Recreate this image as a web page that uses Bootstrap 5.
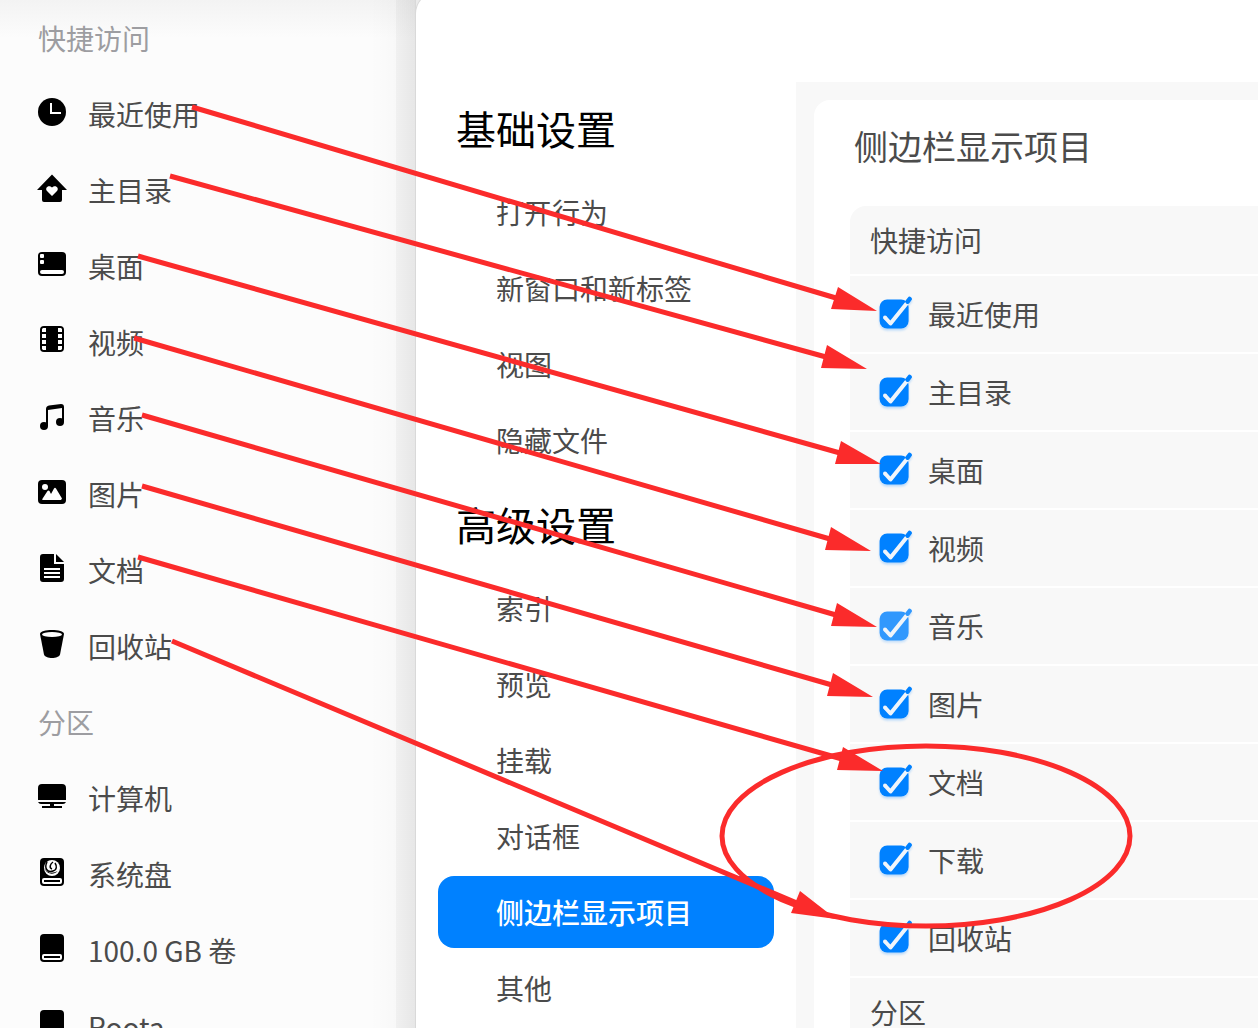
<!DOCTYPE html>
<html lang="zh-CN">
<head>
<meta charset="utf-8">
<meta name="viewport" content="width=device-width, initial-scale=1">
<title>侧边栏显示项目</title>
<link rel="stylesheet" href="https://cdn.jsdelivr.net/npm/bootstrap@5.3.0/dist/css/bootstrap.min.css">
<style>
body{font-family:"Noto Sans CJK SC","Noto Sans",sans-serif;font-size:28px;line-height:40px;color:#4b4b4b;background:#fcfcfc}
a{color:inherit;text-decoration:none}
.places{width:416px;background:
 linear-gradient(to right,transparent 396px,rgba(0,0,0,.03) 396px,rgba(0,0,0,.07) 415px,#d9d9d9 415px),
 linear-gradient(to right,transparent 370px,rgba(0,0,0,.015) 396px),
 linear-gradient(#f3f3f3,#fcfcfc 38px)}
.place-row{height:76px;padding:0 0 0 36px;gap:20px}
.place-head{height:76px;padding-left:38px;color:#9d9da1}
.place-row svg{width:32px;height:36px;color:#000}
.dialog-shell{background:#ebebeb}
.dialog-pane{background:#fff;border-top-left-radius:22px;margin-top:-8px;padding-top:8px;box-shadow:0 0 0 1px #d9d9d9}
.dialog-bar{height:82px}
.cats{width:380px;padding:0 22px}
.cat-head{height:92px;padding-left:18px;font-size:40px;line-height:60px;color:#000;font-weight:400}
.cats .nav-link{height:72px;margin:2px 0;padding:0 0 0 58px;border-radius:16px;color:#4b4b4b}
.cats .nav-link.active{background:#0081ff;color:#fff;font-weight:500}
.options{background:#f8f8f8;padding:18px 0 0 18px}
.sheet{background:#fff;border-top-left-radius:16px;padding-left:36px}
.sheet-title{height:106px;padding:0 0 14px 4px;font-size:34px;line-height:50px;font-weight:400}
.group{background:#f8f8f8;border-top-left-radius:16px}
.group-head{height:68px;padding-left:20px}
.check-row{height:78px;border-top:2px solid #fff;padding-left:29px;gap:15px}
.next-head{border-top:2px solid #fff;height:70px}
.tick{appearance:none;width:34px;height:36px;margin:0;filter:drop-shadow(0 2px 1px rgba(0,129,255,.25));background:url("data:image/svg+xml,%3Csvg xmlns='http://www.w3.org/2000/svg' viewBox='0 0 34 36'%3E%3Crect x='.6' y='3.500' width='29' height='29' rx='7.500' fill='%230081ff'/%3E%3Cpath d='M6 21.500l5.500 6L28 7' fill='none' stroke='%23f0f5fb' stroke-width='4' stroke-linejoin='round'/%3E%3Ccircle cx='6' cy='21.500' r='2' fill='%23f0f5fb'/%3E%3Cpath d='M28.600 5.600L30.600 3' stroke='%230081ff' stroke-width='4.500' stroke-linecap='round'/%3E%3C/svg%3E") center/100% 100% no-repeat}
.tick.faded{opacity:.8}
.notes{left:0;top:0;width:1258px;height:1028px;pointer-events:none;z-index:5}
</style>
<script src="https://cdn.jsdelivr.net/npm/bootstrap@5.3.0/dist/js/bootstrap.bundle.min.js"></script>
</head>
<body class="vh-100 overflow-hidden position-relative">
<div class="d-flex h-100 overflow-hidden">
<aside class="places flex-shrink-0 overflow-hidden">
 <div class="place-head d-flex align-items-center">快捷访问</div>
 <a href="#" class="place-row d-flex align-items-center"><svg viewBox="0 0 32 36"><circle cx="16" cy="16" r="14"/><path d="M15 7v10h10" fill="none" stroke="#fff" stroke-width="2"/></svg><span>最近使用</span></a>
 <a href="#" class="place-row d-flex align-items-center"><svg viewBox="0 0 32 36"><path d="M16 2.5L31 18h-5v10q0 2-2 2H8q-2 0-2-2V18H1z"/><path d="M16 24l-5-5c-2.500-3 1.500-7 5-3.500 3.500-3.500 7.500.5 5 3.500z" fill="#fff"/></svg><span>主目录</span></a>
 <a href="#" class="place-row d-flex align-items-center"><svg viewBox="0 0 32 36"><rect x="2" y="4" width="28" height="24" rx="4"/><g fill="#fff"><rect x="4" y="6" width="4" height="4" rx="1"/><rect x="4" y="12" width="4" height="4" rx="1"/><rect x="4" y="22" width="24" height="4" rx="2"/></g></svg><span>桌面</span></a>
 <a href="#" class="place-row d-flex align-items-center"><svg viewBox="0 0 32 36"><rect x="4" y="2" width="24" height="26" rx="4"/><path fill="#fff" d="M7 4h3v4H6V5zM6 10h4v4H6zM6 16h4v4H6zM6 22h4v4H7l-1-1zM22 4h3l1 1v3h-4zM22 10h4v4h-4zM22 16h4v4h-4zM22 22h4v3l-1 1h-3z"/></svg><span>视频</span></a>
 <a href="#" class="place-row d-flex align-items-center"><svg viewBox="0 0 32 36"><circle cx="8" cy="26" r="4"/><circle cx="24" cy="22" r="4"/><path d="M10 26V9q0-3 3-3.500l12-1.500q3 0 3 3v15h-2V8l-14 2v16z"/></svg><span>音乐</span></a>
 <a href="#" class="place-row d-flex align-items-center"><svg viewBox="0 0 32 36"><rect x="2" y="4" width="28" height="24" rx="4"/><circle cx="9" cy="11" r="3" fill="#fff"/><path fill="#fff" d="M6 23.500L11.500 15q1-1 2 0l1.500 3 3-5.500q1-1.500 2 0l6 10-1 1.500H7z"/></svg><span>图片</span></a>
 <a href="#" class="place-row d-flex align-items-center"><svg viewBox="0 0 32 36"><path d="M7 2h11v10h10v15q0 3-3 3H7q-3 0-3-3V5q0-3 3-3z"/><path d="M20 2l8 8h-8z"/><path d="M8 17h16M8 21h16M8 25h16" stroke="#fff" stroke-width="2"/></svg><span>文档</span></a>
 <a href="#" class="place-row d-flex align-items-center"><svg viewBox="0 0 32 36"><path d="M4 6c0-5.300 24-5.300 24 0l-4 20.500c-1 4.600-15 4.600-16 0z"/><ellipse cx="16" cy="6.500" rx="10" ry="2.500" fill="#fff"/></svg><span>回收站</span></a>
 <div class="place-head d-flex align-items-center">分区</div>
 <a href="#" class="place-row d-flex align-items-center"><svg viewBox="0 0 32 36"><path d="M2 8q0-4 4-4h20q4 0 4 4v12H2zM2 22h28q-1 2-3 2h-9v2h8v2H6v-2h8v-2H5q-2 0-3-2z"/></svg><span>计算机</span></a>
 <a href="#" class="place-row d-flex align-items-center"><svg viewBox="0 0 32 36"><rect x="4" y="2" width="24" height="28" rx="4"/><circle cx="16" cy="12" r="8" fill="#fff"/><path d="M11 6c-3 6 0 11 6 9 4-1 4-5 2-8M17 6c-3 2-4 6-1 7" fill="none" stroke="#000" stroke-width="1.500"/><path d="M8.500 12c2 5 8 6 13 3-3 4-11 4-13-3z"/><rect x="6" y="22" width="20" height="6" rx="2" fill="#fff"/><path d="M8 24h16v2H8z"/></svg><span>系统盘</span></a>
 <a href="#" class="place-row d-flex align-items-center"><svg viewBox="0 0 32 36"><rect x="4" y="2" width="24" height="28" rx="4"/><rect x="6" y="22" width="20" height="6" rx="2" fill="#fff"/><path d="M8 24h16v2H8z"/></svg><span>100.0 GB 卷</span></a>
 <a href="#" class="place-row d-flex align-items-center"><svg viewBox="0 0 32 36"><rect x="4" y="2" width="24" height="28" rx="4"/><rect x="6" y="22" width="20" height="6" rx="2" fill="#fff"/><path d="M8 24h16v2H8z"/></svg><span>Roota</span></a>
</aside>
<div class="dialog-shell flex-grow-1 d-flex">
<main class="dialog-pane flex-grow-1 d-flex flex-column">
 <div class="dialog-bar flex-shrink-0"></div>
 <div class="d-flex flex-grow-1">
 <nav class="cats flex-shrink-0">
  <h2 class="cat-head d-flex align-items-center m-0">基础设置</h2>
  <div class="nav nav-pills flex-column">
   <a href="#" class="nav-link d-flex align-items-center">打开行为</a>
   <a href="#" class="nav-link d-flex align-items-center">新窗口和新标签</a>
   <a href="#" class="nav-link d-flex align-items-center">视图</a>
   <a href="#" class="nav-link d-flex align-items-center">隐藏文件</a>
  </div>
  <h2 class="cat-head d-flex align-items-center m-0">高级设置</h2>
  <div class="nav nav-pills flex-column">
   <a href="#" class="nav-link d-flex align-items-center">索引</a>
   <a href="#" class="nav-link d-flex align-items-center">预览</a>
   <a href="#" class="nav-link d-flex align-items-center">挂载</a>
   <a href="#" class="nav-link d-flex align-items-center">对话框</a>
   <a href="#" class="nav-link active d-flex align-items-center">侧边栏显示项目</a>
   <a href="#" class="nav-link d-flex align-items-center">其他</a>
  </div>
 </nav>
 <section class="options flex-grow-1">
  <div class="sheet h-100">
   <h1 class="sheet-title d-flex align-items-center m-0">侧边栏显示项目</h1>
   <div class="group">
    <div class="group-head d-flex align-items-center">快捷访问</div>
    <label class="check-row d-flex align-items-center"><input type="checkbox" class="tick" checked><span>最近使用</span></label>
    <label class="check-row d-flex align-items-center"><input type="checkbox" class="tick" checked><span>主目录</span></label>
    <label class="check-row d-flex align-items-center"><input type="checkbox" class="tick" checked><span>桌面</span></label>
    <label class="check-row d-flex align-items-center"><input type="checkbox" class="tick" checked><span>视频</span></label>
    <label class="check-row d-flex align-items-center"><input type="checkbox" class="tick faded" checked><span>音乐</span></label>
    <label class="check-row d-flex align-items-center"><input type="checkbox" class="tick" checked><span>图片</span></label>
    <label class="check-row d-flex align-items-center"><input type="checkbox" class="tick" checked><span>文档</span></label>
    <label class="check-row d-flex align-items-center"><input type="checkbox" class="tick" checked><span>下载</span></label>
    <label class="check-row d-flex align-items-center"><input type="checkbox" class="tick" checked><span>回收站</span></label>
    <div class="group-head next-head d-flex align-items-center">分区</div>
   </div>
  </div>
 </section>
 </div>
</main>
</div>
</div>
<!-- Annotation layer: arrows from each place to its option, and a ring -->
<svg class="notes position-absolute" viewBox="0 0 1258 1028" aria-hidden="true">
 <g fill="none" stroke="#fb2b2b" stroke-width="5">
  <path d="M192 107L836 298M170 176L826 357M138 256L840 453M134 338L830 539M142 415L836 615M142 486L832 685M138 557L842 759M172 641L797 903"/>
  <ellipse cx="926" cy="836" rx="204" ry="90"/>
 </g>
 <path fill="#fb2b2b" d="M838 287L831 309L877 311zM827 345L821 368L867 369zM841 441L835 464L881 464zM831 527L825 550L871 551zM837 603L831 626L877 627zM833 673L827 696L873 697zM843 747L837 770L883 771zM800 891L791 913L836 919z"/>
</svg>
</body>
</html>
